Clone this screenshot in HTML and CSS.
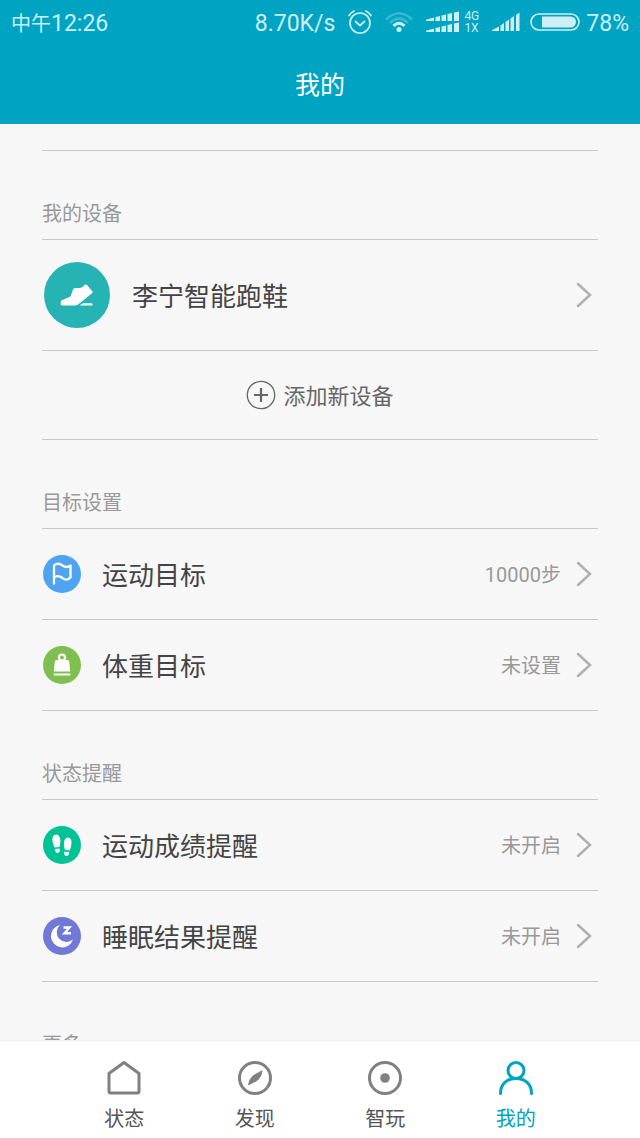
FILE: index.html
```
<!DOCTYPE html>
<html lang="zh-CN">
<head>
    <meta charset="UTF-8">
    <meta name="viewport" content="width=device-width, initial-scale=1.0">
    <title>我的</title>
    <link rel="stylesheet" href="styles.css">
</head>
<body>

<header class="header">
    <div class="status-bar">
        <div class="status-text"><span class="status-cn">中午</span>12:26</div>
        <div class="status-right">
            <span class="status-text">8.70K/s</span>
            <svg class="icon-alarm" width="24" height="24" viewBox="0 0 24 24" fill="none" stroke="currentColor" stroke-width="1.700" stroke-linecap="round">
                <circle cx="12" cy="13" r="10"/>
                <path d="M7.5 11.5l4.5 4 4.500-4"/>
                <path d="M1 5.500Q3 2.500 6 1M23 5.500Q21 2.500 18 1"/>
            </svg>
            <svg class="icon-wifi" width="28" height="22" viewBox="0 0 28 22" fill="none" stroke="currentColor">
                <g stroke-width="2.600" opacity="0.28">
                    <path d="M1 8.500Q14-4 27 8.500"/>
                    <path d="M5 12Q14 3 23 12"/>
                </g>
                <path d="M8.500 15Q14 9.500 19.500 15" stroke-width="3"/>
                <circle cx="14" cy="18.500" r="2.500" fill="currentColor" stroke="none"/>
            </svg>
            <svg class="icon-dual" width="34" height="22" viewBox="0 0 34 22" fill="currentColor">
                <path d="M0 10V8.800L8 6.500V10zM9.500 10V6L14 5V10zM15.500 10V4.500L20 3.500V10zM21.500 10V3L26 2V10zM28 10V1.500L33 .5V10z"/>
                <path d="M0 21V19.800L8 17.500V21zM9.500 21V17L14 16V21zM15.500 21V15.500L20 14.500V21zM21.500 21V14L26 13V21zM28 21V12.500L33 11.500V21z"/>
            </svg>
            <span class="network"><span>4G</span><span>1X</span></span>
            <svg class="icon-signal" width="28" height="20" viewBox="0 0 28 20" fill="currentColor">
                <path d="M0 19V18.300L7 14.500V19zM8.500 19V13.500L12 11V19zM13.500 19V10L17 7.500V19zM18.500 19V6.500L22 4V19zM24 19V3L27.500.5V19z"/>
            </svg>
            <svg class="icon-battery" width="50" height="18" viewBox="0 0 50 18">
                <rect x="1" y="1" width="48" height="16" rx="8" fill="none" stroke="currentColor" stroke-width="1.600"/>
                <path d="M12 3.500H40.500a5.500 5.500 0 0 1 0 11H12z" fill="currentColor"/>
            </svg>
            <span class="status-text percent">78%</span>
        </div>
    </div>
    <h1>我的</h1>
</header>

<main class="content">
    <div class="top-line"></div>

    <h2>我的设备</h2>
    <ul class="list">
        <li>
            <a class="row device" href="#">
                <svg class="device-icon" width="66" height="66" viewBox="0 0 66 66">
                    <circle cx="33" cy="33" r="33" fill="#25b3b3"/>
                    <path d="M17 39.500Q16.500 38.500 19 37.800L26.500 34.500L29 27.500Q29.500 26 31 26H36Q39 25.500 41 22.600Q42 22 43 23L48.500 29.500Q49 30.500 48 31.300L36 41Q33 43.500 31 43.500H18.500Q16.500 43.500 16.500 41.500z" fill="#fff"/>
                    <path d="M35.500 43.500L39 41.300H47.500Q48.500 41.300 48.500 43.500z" fill="#fff"/>
                </svg>
                <span class="name">李宁智能跑鞋</span>
                <svg class="arrow" width="16" height="26" viewBox="0 0 16 26"><path d="M2 2l12 11L2 24"/></svg>
            </a>
        </li>
        <li>
            <button class="add" type="button">
                <svg width="30" height="30" viewBox="0 0 30 30" fill="none" stroke="currentColor">
                    <circle cx="15" cy="15" r="13.700" stroke-width="1.300"/>
                    <path d="M8 15h14M15 8v14" stroke-width="2.200"/>
                </svg>
                <span class="add-text">添加新设备</span>
            </button>
        </li>
    </ul>

    <h2>目标设置</h2>
    <ul class="list">
        <li>
            <a class="row" href="#">
                <svg class="row-icon" width="38" height="38" viewBox="0 0 38 38">
                    <circle cx="19" cy="19" r="19" fill="#4fa3f1"/>
                    <path d="M11 28.500V10.500Q15 7 19.500 10.500Q23.500 13.500 27.500 10.500V22.500Q23.500 26.500 19.500 23Q15 19.500 11 22.500" fill="none" stroke="#fff" stroke-width="2.300" stroke-linecap="round" stroke-linejoin="round"/>
                </svg>
                <span class="name">运动目标</span>
                <span class="value">10000步</span>
                <svg class="arrow" width="16" height="26" viewBox="0 0 16 26"><path d="M2 2l12 11L2 24"/></svg>
            </a>
        </li>
        <li>
            <a class="row" href="#">
                <svg class="row-icon" width="38" height="38" viewBox="0 0 38 38">
                    <circle cx="19" cy="19" r="19" fill="#7fbf50"/>
                    <circle cx="19" cy="11.500" r="3" fill="none" stroke="#fff" stroke-width="2.200"/>
                    <path d="M13.500 14H24.500Q26 14 26.200 15.500L27.200 25.500H10.800L11.800 15.500Q12 14 13.500 14z" fill="#fff"/>
                    <path d="M11.500 28.500h15" stroke="#fff" stroke-width="2" stroke-linecap="round"/>
                </svg>
                <span class="name">体重目标</span>
                <span class="value">未设置</span>
                <svg class="arrow" width="16" height="26" viewBox="0 0 16 26"><path d="M2 2l12 11L2 24"/></svg>
            </a>
        </li>
    </ul>

    <h2>状态提醒</h2>
    <ul class="list">
        <li>
            <a class="row" href="#">
                <svg class="row-icon" width="38" height="38" viewBox="0 0 38 38">
                    <circle cx="19" cy="19" r="19" fill="#00c395"/>
                    <g fill="#fff">
                        <path d="M13 8.500C16 8.500 17.500 12 17.300 16Q17 19 16.500 21L11.500 21.500Q9.300 17 9.300 13.500Q9.500 8.800 13 8.500z"/>
                        <path d="M11.800 23L16.500 22.500Q17.500 26.500 14.700 27Q12 27 11.800 23z"/>
                        <path d="M25 11.500C22 11.500 20.800 15 21 18.500Q21.200 21.500 21.700 23.500L26.500 24.500Q28.500 20.500 28.600 16.500Q28.500 11.800 25 11.500z"/>
                        <path d="M21.500 25.500L26.200 26.300Q26.200 30 23.300 30Q20.500 29.700 21.500 25.500z"/>
                    </g>
                </svg>
                <span class="name">运动成绩提醒</span>
                <span class="value">未开启</span>
                <svg class="arrow" width="16" height="26" viewBox="0 0 16 26"><path d="M2 2l12 11L2 24"/></svg>
            </a>
        </li>
        <li>
            <a class="row" href="#">
                <svg class="row-icon" width="38" height="38" viewBox="0 0 38 38">
                    <circle cx="19" cy="19" r="19" fill="#7179d6"/>
                    <path d="M17 8A11.300 11.300 0 1 0 30 22.500A9.500 9.500 0 0 1 17 8z" fill="#fff"/>
                    <path d="M20.500 10.500h6l-5 5.800h6.500" fill="none" stroke="#fff" stroke-width="2.400"/>
                </svg>
                <span class="name">睡眠结果提醒</span>
                <span class="value">未开启</span>
                <svg class="arrow" width="16" height="26" viewBox="0 0 16 26"><path d="M2 2l12 11L2 24"/></svg>
            </a>
        </li>
    </ul>

    <h2>更多</h2>
</main>

<nav class="tabs">
    <a href="#">
        <svg width="36" height="36" viewBox="0 0 36 36">
            <path d="M18 2.500L33 13.500V31.500Q33 33 31.500 33H4.500Q3 33 3 31.500V13.500z"/>
        </svg>
        状态
    </a>
    <a href="#">
        <svg width="36" height="36" viewBox="0 0 36 36">
            <circle cx="18" cy="18" r="15.500"/>
            <path d="M25 11.200Q24.500 17 20 20.500L11.500 24.800Q12.500 18.500 16.500 15.500z" fill="currentColor" stroke-width="1"/>
        </svg>
        发现
    </a>
    <a href="#">
        <svg width="36" height="36" viewBox="0 0 36 36">
            <circle cx="18" cy="18" r="15.500"/>
            <circle cx="18" cy="18" r="4.800" fill="currentColor" stroke="none"/>
        </svg>
        智玩
    </a>
    <a class="active" href="#">
        <svg width="36" height="36" viewBox="0 0 36 36">
            <circle cx="18" cy="10.500" r="8"/>
            <path d="M2.500 33.500C2.500 24 9 18.500 18 18.500S33.500 24 33.500 33.500"/>
        </svg>
        我的
    </a>
</nav>

</body>
</html>
```
FILE: styles.css
```
* {
    box-sizing: border-box;
}
body {
    margin: 0;
    height: 100vh;
    display: flex;
    flex-direction: column;
    background-color: #f7f7f7;
    color: #444;
    font-family: Roboto, "Noto Sans CJK SC", sans-serif;
}
a {
    color: inherit;
    text-decoration: none;
}
svg {
    flex-shrink: 0;
}

/* Header */
.header {
    flex-shrink: 0;
    background-color: #00a4c3;
    color: #fff;
}
.status-bar {
    display: flex;
    justify-content: space-between;
    align-items: center;
    height: 44px;
    padding: 0 11px;
    color: #cdeff4;
}
.status-text {
    padding-top: 4px;
    font-size: 23px;
    line-height: 30px;
}
.status-cn {
    font-size: 20px;
}
.status-right {
    display: flex;
    align-items: center;
}
.icon-alarm, .icon-wifi, .icon-dual, .icon-signal {
    margin-left: 13px;
}
.network {
    display: flex;
    flex-direction: column;
    margin-left: 4px;
    font-size: 12px;
    line-height: 12px;
}
.icon-battery {
    margin-left: 10px;
}
.percent {
    margin-left: 6px;
}
.header h1 {
    margin: 0;
    height: 80px;
    line-height: 84px;
    font-size: 25px;
    font-weight: 400;
    text-align: center;
}

/* Settings list */
.content {
    flex: 1;
    min-height: 0;
    overflow: hidden;
    padding: 0 42px;
}
.top-line {
    height: 27px;
    border-bottom: 1px solid #c8c8c8;
}
.content h2 {
    margin: 0;
    padding: 48px 0 10px;
    border-bottom: 1px solid #c8c8c8;
    color: #999;
    font-size: 20px;
    font-weight: 400;
    line-height: 30px;
}
.list {
    margin: 0;
    padding: 0;
    list-style: none;
}
.row {
    display: flex;
    align-items: center;
    height: 91px;
    padding: 0 6px 0 1px;
    border-bottom: 1px solid #c8c8c8;
}
.device {
    height: 111px;
}
.row-icon {
    margin-right: 21px;
}
.device-icon {
    margin: 0 22px 0 1px;
}
.name, .value, .add-text {
    padding-bottom: 2px;
}
.name {
    flex: 1;
    font-size: 26px;
}
.value {
    margin-right: 15px;
    color: #999;
    font-size: 20px;
}
.arrow {
    fill: none;
    stroke: #b0b0b0;
    stroke-width: 2.5;
    stroke-linecap: round;
}
.add {
    display: flex;
    justify-content: center;
    align-items: center;
    gap: 7px;
    width: 100%;
    height: 89px;
    padding: 0;
    border: none;
    border-bottom: 1px solid #c8c8c8;
    background: none;
    color: #666;
    font-family: inherit;
    font-size: 22px;
    cursor: pointer;
}

/* Bottom tabs */
.tabs {
    flex-shrink: 0;
    display: flex;
    height: 98px;
    padding: 0 59px;
    border-top: 1px solid #eee;
    background-color: #fff;
}
.tabs a {
    flex: 1;
    display: flex;
    flex-direction: column;
    align-items: center;
    gap: 8px;
    padding-top: 19px;
    color: #555;
    font-size: 20px;
    line-height: 30px;
}
.tabs svg {
    fill: none;
    stroke: currentColor;
    stroke-width: 3;
    stroke-linecap: round;
    stroke-linejoin: round;
    color: #808080;
}
.tabs .active, .tabs .active svg {
    color: #00a4c3;
}
```
